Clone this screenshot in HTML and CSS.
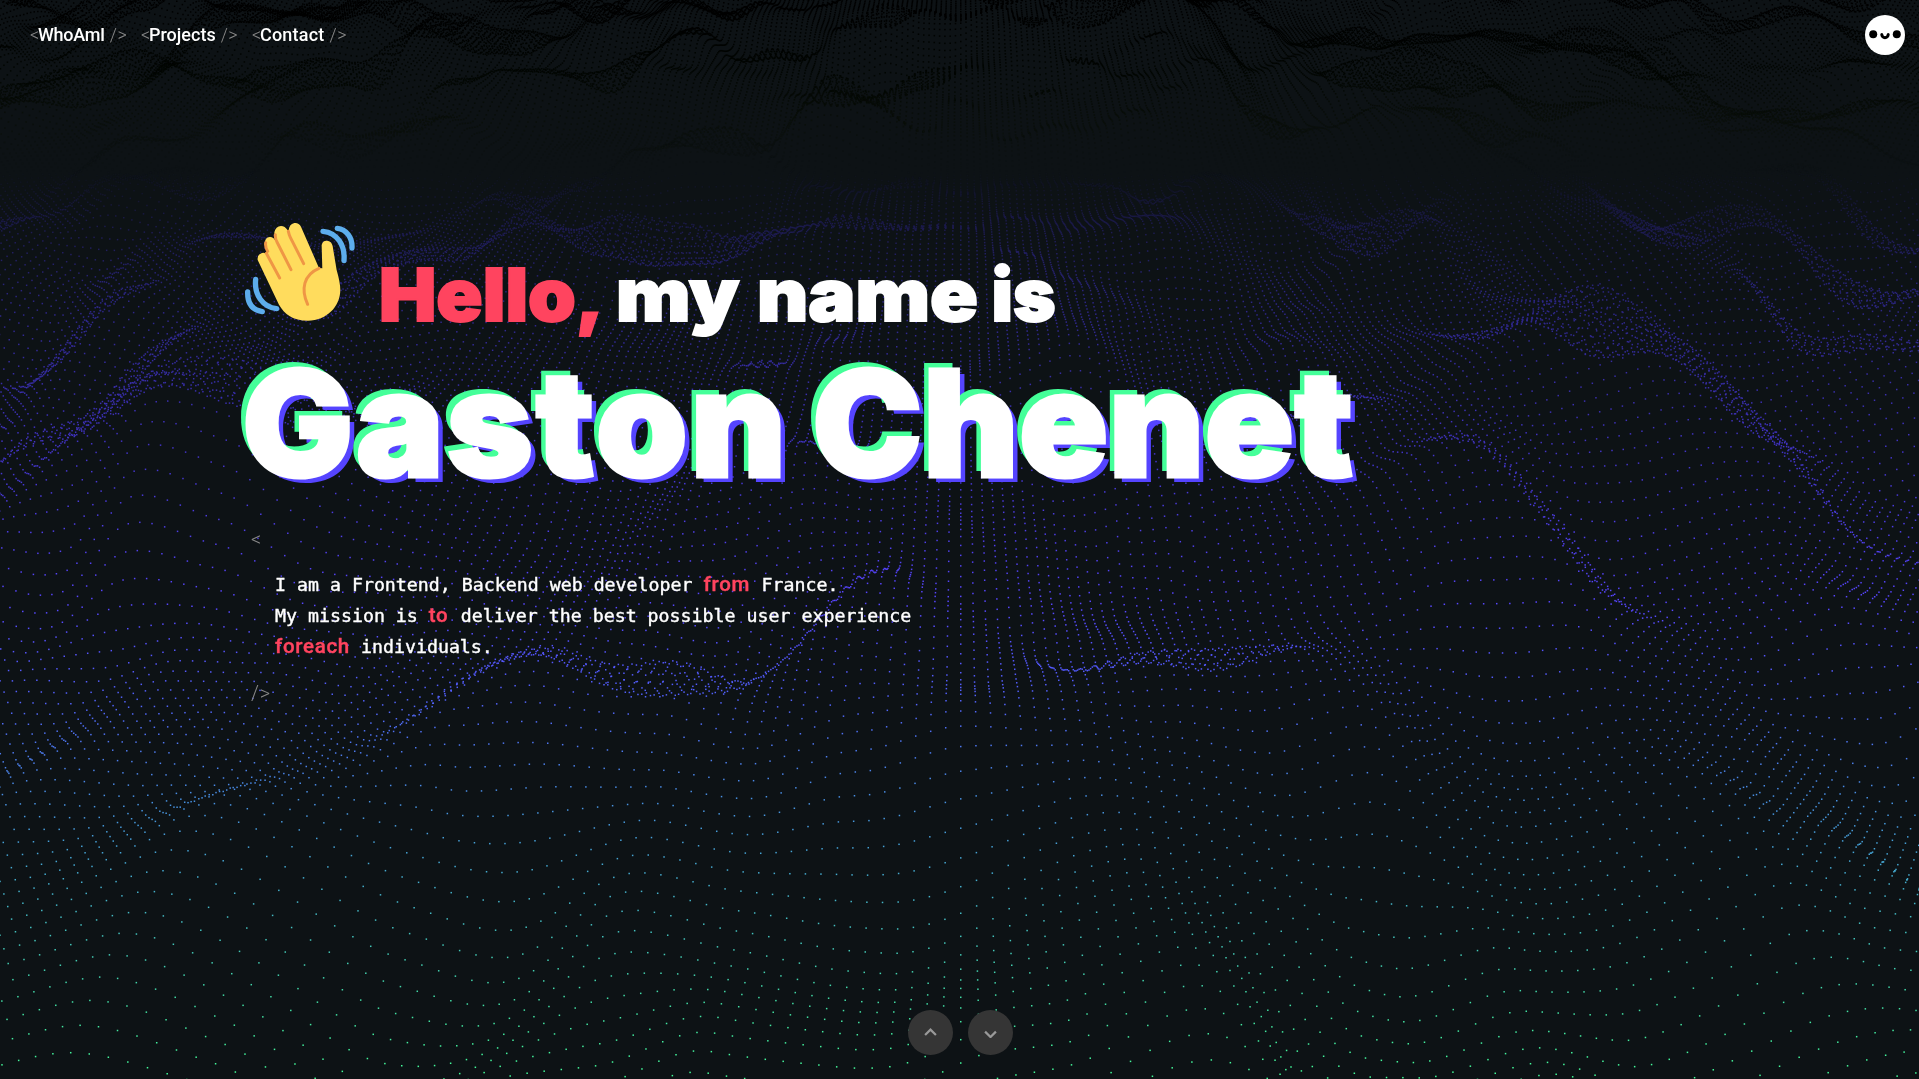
FILE: index.html
```html
<!DOCTYPE html>
<html lang="en">
<head>
<meta charset="utf-8">
<title>Gaston Chenet</title>
<link rel="stylesheet" href="styles.css">
</head>
<body>
<canvas class="waves" width="1919" height="1079"></canvas>
<div class="page">
  <header class="topbar">
    <nav class="nav">
      <a class="nav-link"><i>&lt;</i><b>WhoAmI</b><i class="end">/&gt;</i></a>
      <a class="nav-link"><i>&lt;</i><b>Projects</b><i class="end">/&gt;</i></a>
      <a class="nav-link"><i>&lt;</i><b>Contact</b><i class="end">/&gt;</i></a>
    </nav>
    <svg class="face" viewBox="0 0 40 40">
      <circle cx="20" cy="20" r="20" fill="#fff"/>
      <circle cx="8.2" cy="19.3" r="4" /><circle cx="31.8" cy="19.3" r="4"/>
      <path d="M16.8 19.4a3.2 3.3 0 0 0 6.4 0" fill="none" stroke="#000" stroke-width="3" stroke-linecap="round"/>
    </svg>
  </header>
  <main class="hero">
    <div class="greeting">
      <svg class="hand" viewBox="40 60 340 310">
        <path fill="#ffdc5d" d="M84 180Q82 163 97 159Q110 156 117 171L106 132Q104 113 120 111Q131 110 137 122L134 97Q138 79 154 78Q166 78 174 91L177 93Q178 72 194 69Q207 67 214 80L268 204L278 205L276 135Q279 121 292 122Q306 123 309 138L321 210Q332 248 332 270C332 320 290 362 235 362C190 362 164 342 148 314Z"/>
        <g fill="none" stroke="#ef9645" stroke-width="9" stroke-linecap="round">
          <path d="M110 160L150 234M108 128Q106 142 114 154"/>
          <path d="M137 104Q136 116 142 126L184 209M176 94Q178 104 182 112L222 191"/>
          <path d="M268 205C222 224 213 268 234 313"/>
        </g>
        <g fill="none" stroke="#5dadec" stroke-width="16" stroke-linecap="round">
          <path d="M280 94C323 98 347 137 343 182M323 85C350 88 369 112 367 144M78 238C73 285 99 321 141 326M54 276C53 312 70 331 98 335"/>
        </g>
      </svg>
      <h2 class="hello"><span class="w1">Hello,</span><span class="w2">my</span><span class="w3">name</span><span class="w4">is</span></h2>
    </div>
    <h1 class="name"><span class="first">Gaston</span><span class="last">Chenet</span></h1>
    <section class="about">
      <span class="tag">&lt;</span>
      <p class="bio">I am a Frontend, Backend web developer <em class="k1">from</em> France.<br>My mission is <em class="k2">to</em> deliver the best possible user experience<br><em class="k3">foreach</em> individuals.</p>
      <span class="tag">/&gt;</span>
    </section>
  </main>
  <div class="pager">
    <button class="round"><svg viewBox="0 0 12 8"><path d="M1 6.5 6 1.5 11 6.5"/></svg></button>
    <button class="round down"><svg viewBox="0 0 12 8"><path d="M1 1.5 6 6.5 11 1.5"/></svg></button>
  </div>
</div>
<script src="waves.js"></script>
</body>
</html>
```
FILE: waves.js
```js
// Perspective field of points, lifted by smooth noise.
const canvas = document.querySelector('.waves');
const ctx = canvas.getContext('2d');

function hash(x, y) {
  const n = Math.sin(x * 127.1 + y * 311.7) * 43758.5453;
  return n - Math.floor(n);
}
function noise(x, y) {
  const ix = Math.floor(x), iy = Math.floor(y);
  const fx = x - ix, fy = y - iy;
  const u = fx * fx * (3 - 2 * fx), v = fy * fy * (3 - 2 * fy);
  const a = hash(ix, iy), b = hash(ix + 1, iy), c = hash(ix, iy + 1), d = hash(ix + 1, iy + 1);
  return a + (b - a) * u + (c - a) * v + (a - b - c + d) * u * v;
}
// Single ridges: column, row, column radius, row radius, height
const ridges = [
  [-46, 12, 9, 8, .5], [-32, 26, 6, 8, .3], [-66, 45, 12, 9, .8], [46, 36, 10, 9, .5],
  [64, 58, 13, 9, .7], [-8, 28, 8, 6, .3], [54, 10, 9, 8, .35], [16, 44, 10, 8, -.35]
];
const stops = [
  [0, 0, 0, 0], [70, 2, 6, 2], [120, 10, 15, 10], [170, 13, 18, 21], [220, 27, 26, 72],
  [300, 44, 38, 130], [450, 66, 52, 198], [600, 88, 70, 255], [700, 82, 98, 250],
  [800, 72, 145, 225], [900, 68, 180, 200], [1000, 66, 220, 165], [1079, 68, 255, 153]
];
function colour(y) {
  let i = 0;
  while (i < stops.length - 2 && stops[i + 1][0] < y) i++;
  const p = stops[i], q = stops[i + 1];
  const t = Math.max(0, Math.min(1, (y - p[0]) / (q[0] - p[0])));
  return 'rgb(' + [1, 2, 3].map(k => Math.round(p[k] + (q[k] - p[k]) * t)).join(',') + ')';
}
for (let j = -20; j < 270; j++) {
  const d = 1 + 0.0131 * j;
  for (let i = -240; i <= 240; i++) {
    let h = noise(i / 15 + 40.3, j / 15 + 7.7) + 0.35 * noise(i / 7 + 3, j / 8 + 21) - 0.65;
    for (const [ci, cj, ri, rj, top] of ridges) {
      h += top * Math.exp(-(((i - ci) / ri) ** 2) - ((j - cj) / rj) ** 2);
    }
    const s = 1 / (d - 0.06 * h);
    const x = 960 + i * 17.7 * s;
    const y = -393 + (1463 - 265 * h) * s;
    if (x < -2 || x > 1921 || y < -2 || y > 1081) continue;
    ctx.fillStyle = colour(y);
    ctx.fillRect(x, y, 1.5, 1.5);
  }
}
```
FILE: styles.css
```css
* { box-sizing: border-box; }
body { margin: 0; background: #0d1215; color: #fff; font-family: Roboto, sans-serif; overflow: hidden; }
.waves { position: absolute; inset: 0; }
.page { position: relative; height: 1079px; display: flex; flex-direction: column; }
.topbar { display: flex; justify-content: space-between; padding: 15px 14px 0 30px; height: 70px; }
.nav { display: flex; height: 38px; align-items: center; font-size: 18px; }
.nav-link { display: flex; width: 111px; white-space: nowrap; }
.nav-link i { font-style: normal; font-weight: 300; color: #888; width: 8px; }
.nav-link b { font-weight: 500; }
.nav-link:first-child b { letter-spacing: -.3px; }
.nav-link:last-child b { letter-spacing: .2px; }
.nav-link .end { margin-left: 5px; width: auto; letter-spacing: .5px; }
.face { width: 40px; height: 40px; }
.hero { flex: 1; padding-left: 241px; }
.greeting { display: flex; height: 280px; padding-top: 150px; }
.hand { width: 113.3px; height: 103.3px; margin-left: 2.3px; flex: none; }
h1, h2 { margin: 0; font-family: Inter, sans-serif; font-weight: 900; display: flex; white-space: nowrap; }
.hello { font-size: 72.5px; line-height: 80px; margin-top: 35px; margin-left: 22px; -webkit-text-stroke: 2px; }
.hello span { flex: none; transform-origin: 0 50%; }
.w1 { width: 237px; color: #ff445f; transform: scaleX(1.055); }
.w2 { width: 141px; transform: scaleX(1.09); }
.w3 { width: 235px; transform: scaleX(1.09); }
.name { height: 150px; font-size: 148px; line-height: 148px; padding-left: 1px; -webkit-text-stroke: 3px #fff; text-shadow: -6px -6.5px #4f9, 6px 4.5px #54f; }
.first { width: 570px; letter-spacing: 2.2px; flex: none; }
.last { letter-spacing: 0; }
.about { display: flex; flex-direction: column; margin-top: 27px; padding-left: 10px; }
.tag { color: #888; font-size: 20px; font-weight: 300; line-height: 24px; letter-spacing: .8px; }
.bio { margin: 18px 0 19px 24px; font: 18.25px/31px "DejaVu Sans Mono", monospace; -webkit-text-stroke: .4px; }
.bio em { display: inline-block; font: 500 20.5px/30px Roboto, sans-serif; color: #ff445f; letter-spacing: .7px; white-space: nowrap; }
.k1 { width: 47px; }
.k2 { width: 21px; }
.k3 { width: 75px; }
.pager { display: flex; justify-content: center; gap: 15px; padding: 0 0 24px 2px; }
.round { width: 45px; height: 45px; border: 0; border-radius: 50%; background: #353535; display: flex; align-items: center; justify-content: center; padding: 0; }
.round svg { width: 13px; height: 8.7px; fill: none; stroke: #999; stroke-width: 2; margin-right: 1px; }
.down svg { margin-top: 3px; }
```
